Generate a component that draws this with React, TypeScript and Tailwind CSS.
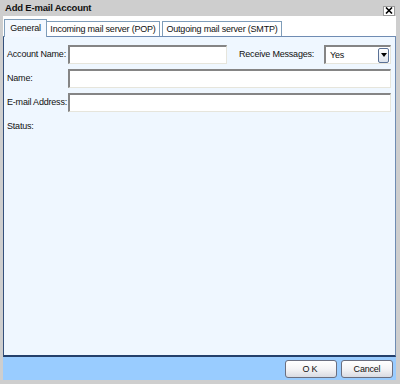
import React from 'react'

const font = { fontFamily: '"Liberation Sans", Arial, sans-serif' }

function Field({ className = '', children }: { className?: string; children?: React.ReactNode }) {
  return (
    <div
      className={`h-[19px] bg-white border-t-2 border-l-2 border-r border-b border-t-[#858585] border-l-[#858585] border-r-[#e6e5dc] border-b-[#e6e5dc] ${className}`}
    >
      {children}
    </div>
  )
}

function Row({ label, children }: { label: string; children?: React.ReactNode }) {
  return (
    <div className="flex items-center h-[19px]">
      <div className="w-[61px] shrink-0 text-[9px] tracking-[-0.2px] text-[#111] leading-none whitespace-nowrap">{label}</div>
      {children}
    </div>
  )
}

export default function App() {
  return (
    <div className="w-[400px] h-[384px] bg-[#cecece] flex flex-col" style={font}>
      {/* title bar */}
      <div className="h-[16px] flex items-center justify-between pl-[5px] pr-[5px]">
        <span className="text-[9.5px] font-bold tracking-[-0.2px] text-[#111] leading-none">Add E-mail Account</span>
        <div className="w-[12px] h-[10px] mt-[5px] bg-white border border-[#9a9a9a] flex items-center justify-center">
          <svg width="8" height="7" viewBox="0 0 8 7">
            <path d="M1 0.5 L7 6.5 M7 0.5 L1 6.5" stroke="#000" strokeWidth="1.6" />
          </svg>
        </div>
      </div>

      {/* body */}
      <div className="flex-1 flex flex-col ml-[3px] mr-[4px] mb-[4px] bg-white">
        {/* tabs */}
        <div className="h-[20px] flex items-end pl-[1px] relative z-10">
          <div className="w-[43px] h-[18px] -mb-px bg-[#f3f8ff] border border-b-0 border-[#7f9db9] flex items-center justify-center text-[9px] tracking-[-0.2px] leading-none text-[#111] whitespace-nowrap">
            General
          </div>
          <div className="w-[114px] h-[15px] -ml-px bg-white border border-b-0 border-[#7f9db9] flex items-center justify-center text-[9px] tracking-[-0.2px] leading-none text-[#111] whitespace-nowrap">
            Incoming mail server (POP)
          </div>
          <div className="w-[120px] h-[15px] ml-[2px] bg-white border border-b-0 border-[#7f9db9] flex items-center justify-center text-[9px] tracking-[-0.2px] leading-none text-[#111] whitespace-nowrap">
            Outgoing mail server (SMTP)
          </div>
        </div>

        {/* panel */}
        <div className="flex-1 bg-[#eff7ff] border border-[#6f8cb3] border-l-[#34507c] border-b-2 border-b-[#24406b] pt-[8px] pl-[3px] pr-[4px] flex flex-col gap-[5px]">
          <Row label="Account Name:">
            <Field className="w-[159px]" />
            <div className="ml-[12px] w-[85px] text-[9px] tracking-[-0.2px] leading-none text-[#111] whitespace-nowrap">Receive Messages:</div>
            <Field className="flex-1 flex items-center justify-between pl-[4px] pr-[1px]">
              <span className="text-[9px] tracking-[-0.2px] leading-none text-[#111]">Yes</span>
              <div className="w-[11px] h-[15px] rounded-[2px] border border-[#5a7196] bg-gradient-to-b from-white to-[#dde3ec] flex items-center justify-center">
                <svg width="6" height="4" viewBox="0 0 6 4">
                  <path d="M0 0 H6 L3 4 Z" fill="#000" />
                </svg>
              </div>
            </Field>
          </Row>
          <Row label="Name:">
            <Field className="flex-1" />
          </Row>
          <Row label="E-mail Address:">
            <Field className="flex-1" />
          </Row>
          <Row label="Status:" />
        </div>

        {/* footer */}
        <div className="h-[23px] bg-[#99ccff] flex justify-end items-start pt-[3px] pr-[3px] gap-[4px]">
          <button className="w-[52px] h-[18px] rounded-[3px] border border-[#6b6f80] bg-gradient-to-b from-white via-[#f4f4f6] to-[#d9dbe2] text-[9px] leading-none text-[#111] tracking-[2px]">
            OK
          </button>
          <button className="w-[52px] h-[18px] rounded-[3px] border border-[#6b6f80] bg-gradient-to-b from-white via-[#f4f4f6] to-[#d9dbe2] text-[9px] tracking-[-0.2px] leading-none text-[#111]">
            Cancel
          </button>
        </div>
      </div>
    </div>
  )
}
